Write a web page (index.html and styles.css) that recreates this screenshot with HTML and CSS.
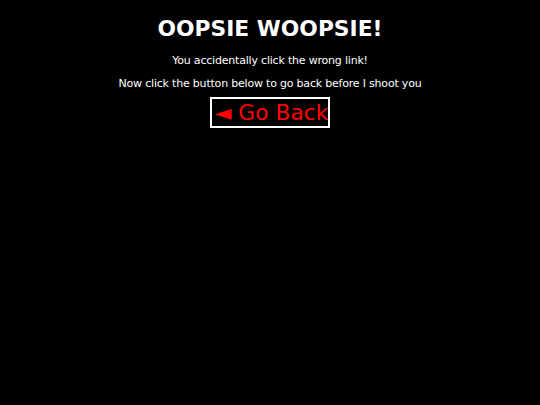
FILE: index.html
```html
<!DOCTYPE html>
<html lang="en">
<head>
    <meta charset="UTF-8">
    <title>Oopsie Woopsie</title>
    <link rel="stylesheet" href="styles.css">
</head>
<body>
    <div class="wrap">
        <h1>OOPSIE WOOPSIE!</h1>
        <p>You accidentally click the wrong link!</p>
        <p class="last">Now click the button below to go back before I shoot you</p>
        <a class="back" href="#">&#9668; Go Back</a>
    </div>
</body>
</html>
```
FILE: styles.css
```css
* {
    box-sizing: border-box;
    margin: 0;
    padding: 0;
}

body {
    background: #000;
    color: #fff;
    font-family: "DejaVu Sans", Verdana, sans-serif;
    text-align: center;
}

.wrap {
    display: flex;
    flex-direction: column;
    align-items: center;
    padding-top: 15px;
}

h1 {
    font-size: 21.8px;
    font-weight: bold;
    line-height: 28px;
    margin-bottom: 11px;
}

p {
    font-size: 11px;
    line-height: 14px;
    letter-spacing: -0.2px;
    margin-bottom: 9px;
}

p.last {
    margin-bottom: 6px;
}

.back {
    display: inline-block;
    color: #f00;
    text-decoration: none;
    font-size: 21.8px;
    line-height: 26px;
    border: 2px solid #fff;
    padding: 1px 0 0 3px;
}
```
